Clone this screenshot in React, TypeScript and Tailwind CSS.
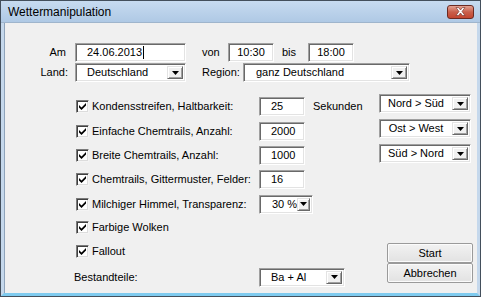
import React from "react";

const font = "font-['Liberation_Sans','Arial',sans-serif]";

// sunken 3D edge like a classic Windows text field
const sunken =
  "border border-t-[#a0a0a0] border-l-[#a0a0a0] border-b-white border-r-white shadow-[inset_1px_1px_0_#696969,inset_-1px_-1px_0_#e3e3e3] bg-white";

function Caret() {
  return (
    <svg width="7" height="4" viewBox="0 0 7 4">
      <path d="M0 0H7L3.5 4Z" fill="#000" />
    </svg>
  );
}

function DropButton() {
  return (
    <div className="w-[16px] self-stretch my-[2px] mr-[2px] flex items-center justify-center bg-[#f0f0f0] border border-t-[#e3e3e3] border-l-[#e3e3e3] border-b-[#696969] border-r-[#696969] shadow-[inset_1px_1px_0_#fff,inset_-1px_-1px_0_#a0a0a0]">
      <Caret />
    </div>
  );
}

function TextBox({
  value,
  w,
  align = "left",
  pad = "pl-[11px]",
  caret = false,
}: {
  value: string;
  w: string;
  align?: "left" | "center";
  pad?: string;
  caret?: boolean;
}) {
  return (
    <div
      className={`${sunken} ${w} h-[19px] shrink-0 flex items-center ${
        align === "center" ? "justify-center" : pad
      }`}
    >
      <span className="text-[11px] leading-none text-black">{value}</span>
      {caret && <span className="w-px h-[13px] bg-black ml-px" />}
    </div>
  );
}

function Combo({
  value,
  w,
  center = false,
  pad = "pl-[11px]",
}: {
  value: string;
  w: string;
  center?: boolean;
  pad?: string;
}) {
  return (
    <div className={`${sunken} ${w} h-[19px] shrink-0 flex items-stretch`}>
      <div
        className={`flex-1 flex items-center ${center ? "justify-center" : pad}`}
      >
        <span className="text-[11px] leading-none text-black whitespace-nowrap">
          {value}
        </span>
      </div>
      <DropButton />
    </div>
  );
}

function Check() {
  return (
    <div className="w-[13px] h-[13px] shrink-0 border border-t-[#7a7a7a] border-l-[#7a7a7a] border-b-[#f4f4f4] border-r-[#f4f4f4] shadow-[inset_1px_1px_0_#404040,inset_-1px_-1px_0_#dcdcdc] bg-white flex items-center justify-center">
      <svg width="7" height="7" viewBox="0 0 7 7">
        <path d="M0 2L0 4.5L2.5 7L7 2.5L7 0L2.5 4.5Z" fill="#000" />
      </svg>
    </div>
  );
}

function CheckRow({
  label,
  h,
  children,
}: {
  label: string;
  h: string;
  children?: React.ReactNode;
}) {
  return (
    <div className={`flex items-center ${h}`}>
      <div className="w-[72px] shrink-0" />
      <Check />
      <div className="w-[170px] shrink-0 pl-[3px] text-[11px] whitespace-nowrap">
        {label}
      </div>
      {children}
    </div>
  );
}

function Button({ label }: { label: string }) {
  return (
    <div className="w-[86px] h-[20px] flex items-center justify-center bg-gradient-to-b from-[#f2f2f2] to-[#e2e2e2] border border-[#9a9a9a] rounded-[2px] text-[11px] shadow-[inset_0_0_0_1px_#fbfbfb]">
      {label}
    </div>
  );
}

export default function App() {
  return (
    <div
      className={`${font} w-[481px] h-[297px] flex flex-col bg-[#f0f0f0] overflow-hidden text-black border border-[#434f5c]`}
    >
      {/* Titelleiste */}
      <div className="h-[22px] shrink-0 flex items-center justify-between pl-[7px] pr-[6px] bg-gradient-to-b from-[#c7dbf0] to-[#afc9e5] border-b border-[#9fb5cc]">
        <span className="text-[12px] text-black">Wettermanipulation</span>
        <div className="w-[27px] h-[14px] rounded-[3px] border border-[#6b2a22] bg-gradient-to-b from-[#e3a293] via-[#c95f4b] to-[#c3452f] flex items-center justify-center">
          <svg width="11" height="9" viewBox="0 0 11 9">
            <path
              d="M1 0.5H3.5L5.5 3L7.5 0.5H10L7 4.5L10 8.5H7.5L5.5 6L3.5 8.5H1L4 4.5Z"
              fill="#fff"
              stroke="#6b2a22"
              strokeWidth="0.6"
            />
          </svg>
        </div>
      </div>

      {/* Inhalt */}
      <div className="flex-1 flex flex-col border-x-[3px] border-b-[3px] border-x-[#c5d8ec] border-b-[#7fcbef] shadow-[inset_1px_0_0_#8fa4bb]">
        {/* Datum und Zeit */}
        <div className="flex items-center mt-[20px] h-[19px] text-[11px]">
          <div className="w-[62px] shrink-0 text-right">Am</div>
          <div className="w-[9px] shrink-0" />
          <TextBox value="24.06.2013" w="w-[111px]" caret />
          <div className="w-[42px] shrink-0 pl-[16px]">von</div>
          <TextBox value="10:30" w="w-[46px]" align="center" />
          <div className="w-[34px] shrink-0 pl-[8px]">bis</div>
          <TextBox value="18:00" w="w-[46px]" align="center" />
        </div>

        {/* Land und Region */}
        <div className="flex items-center mt-[1px] h-[19px] text-[11px]">
          <div className="w-[64px] shrink-0 text-right">Land:</div>
          <div className="w-[7px] shrink-0" />
          <Combo value="Deutschland" w="w-[111px]" />
          <div className="w-[57px] shrink-0 pl-[16px]">Region:</div>
          <Combo value="ganz Deutschland" w="w-[167px]" pad="pl-[12px]" />
        </div>

        <div className="flex mt-[12px]">
          {/* linke Spalte */}
          <div className="w-[375px] shrink-0 flex flex-col">
            <CheckRow label="Kondensstreifen, Haltbarkeit:" h="h-[25px]">
              <TextBox value="25" w="w-[46px]" />
              <span className="ml-[8px] text-[11px]">Sekunden</span>
            </CheckRow>
            <CheckRow label="Einfache Chemtrails, Anzahl:" h="h-[24px]">
              <TextBox value="2000" w="w-[46px]" />
            </CheckRow>
            <CheckRow label="Breite Chemtrails, Anzahl:" h="h-[24px]">
              <TextBox value="1000" w="w-[46px]" />
            </CheckRow>
            <CheckRow label="Chemtrails, Gittermuster, Felder:" h="h-[25px]">
              <TextBox value="16" w="w-[46px]" />
            </CheckRow>
            <CheckRow label="Milchiger Himmel, Transparenz:" h="h-[24px]">
              <Combo value="30 %" w="w-[54px]" pad="pl-[12px]" />
            </CheckRow>
            <CheckRow label="Farbige Wolken" h="h-[23px]" />
            <CheckRow label="Fallout" h="h-[24px]" />
            <div className="flex items-center h-[28px]">
              <div className="w-[70px] shrink-0" />
              <div className="w-[185px] shrink-0 text-[11px]">Bestandteile:</div>
              <Combo value="Ba + Al" w="w-[86px]" pad="pl-[11px]" />
            </div>
          </div>

          {/* rechte Spalte */}
          <div className="flex flex-col">
            <div className="flex flex-col gap-[6px]">
              <Combo value="Nord > Süd" w="w-[92px]" center />
              <Combo value="Ost > West" w="w-[92px]" center />
              <Combo value="Süd > Nord" w="w-[92px]" center />
            </div>
            <div className="flex flex-col mt-[80px] ml-[8px]">
              <Button label="Start" />
              <Button label="Abbrechen" />
            </div>
          </div>
        </div>
      </div>
    </div>
  );
}
